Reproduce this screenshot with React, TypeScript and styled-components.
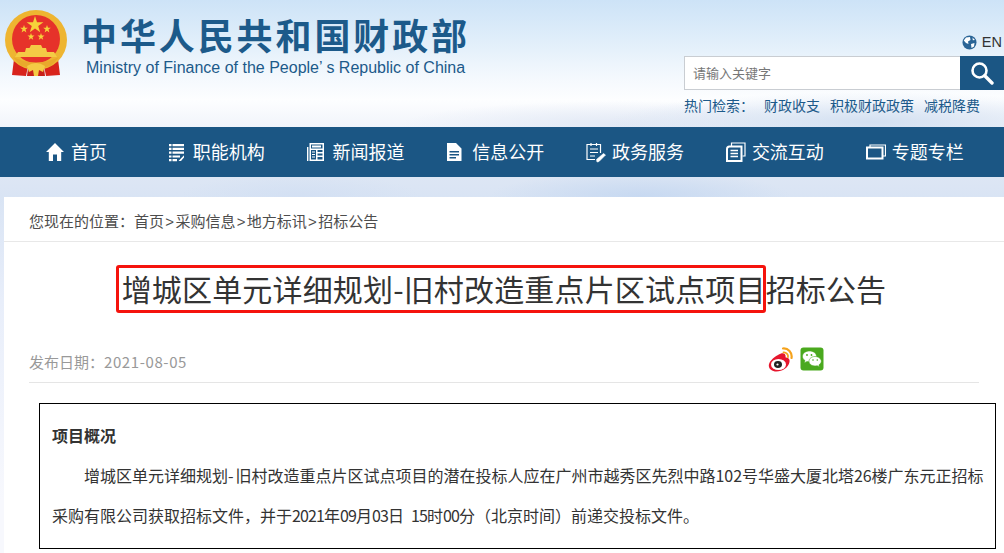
import React from 'react';
import styled, { createGlobalStyle } from 'styled-components';

const GlobalStyle = createGlobalStyle`
  html, body {
    margin: 0;
    padding: 0;
    overflow: hidden;
  }
  body {
    font-family: 'Noto Sans CJK SC', 'Liberation Sans', sans-serif;
    background: #fff;
  }
`;

const Page = styled.div`
  width: 1004px;
  height: 553px;
  overflow: hidden;
  background:
    radial-gradient(ellipse 260px 30px at 870px 122px, #d3e0f1 0%, rgba(211, 224, 241, 0) 100%),
    radial-gradient(ellipse 220px 24px at 620px 125px, #e2e9f5 0%, rgba(226, 233, 245, 0) 100%),
    radial-gradient(ellipse 150px 24px at 640px 196px, #c7d9f1 0%, rgba(199, 217, 241, 0) 100%),
    radial-gradient(ellipse 120px 22px at 300px 196px, #d3e0f3 0%, rgba(211, 224, 243, 0) 100%),
    linear-gradient(
      180deg,
      #cde3f7 0,
      #e0eefa 40px,
      #f3f8fd 75px,
      #fdfeff 100px,
      #f2f5fb 125px,
      #dde6f4 178px,
      #d9e4f4 197px,
      #e8eefa 300px,
      #f7f8fd 500px
    );
`;

const Header = styled.header`
  height: 127px;
  display: flex;
  justify-content: space-between;
`;

const Brand = styled.div`
  display: flex;
  padding: 10px 0 0 5px;
  gap: 14px;
`;

const BrandText = styled.div`
  display: flex;
  flex-direction: column;
`;

const BrandTitle = styled.div`
  font-size: 36px;
  line-height: 48px;
  font-weight: 700;
  letter-spacing: 2.9px;
  color: #1c5a8a;
  white-space: nowrap;
`;

const BrandSub = styled.div`
  font-family: 'Liberation Sans', sans-serif;
  font-size: 16px;
  line-height: 19px;
  margin: 0 0 0 5px;
  color: #1c5a8a;
  white-space: nowrap;
`;

const Tools = styled.div`
  width: 320px;
  display: flex;
  flex-direction: column;
`;

const Lang = styled.div`
  display: flex;
  justify-content: flex-end;
  align-items: center;
  gap: 5px;
  height: 20px;
  margin-top: 32px;
  padding-right: 2px;
  font-family: 'Liberation Sans', sans-serif;
  font-size: 14.5px;
  color: #333;
`;

const Search = styled.div`
  display: flex;
  height: 34px;
  margin-top: 4px;
`;

const SearchInput = styled.div`
  flex: 1;
  box-sizing: border-box;
  background: #fff;
  border: 1px solid #c9cdd2;
  border-right: 0;
  padding-left: 8px;
  font-size: 13px;
  line-height: 32px;
  color: #777;
`;

const SearchButton = styled.div`
  width: 44px;
  background: #1b5684;
  display: flex;
  align-items: center;
  justify-content: center;
`;

const HotRow = styled.div`
  display: flex;
  margin-top: 5px;
  font-size: 14px;
  line-height: 20px;
  color: #1c5a8a;
  white-space: nowrap;
`;

const HotLabel = styled.span`
  width: 80px;
`;

const HotLink = styled.span`
  margin-right: 10px;
`;

const Nav = styled.nav`
  height: 50px;
  display: flex;
  padding-left: 6px;
  background: #1b5684;
`;

const NavItem = styled.div`
  width: 139.8px;
  box-sizing: border-box;
  padding-bottom: 2px;
  display: flex;
  align-items: center;
  justify-content: center;
  gap: 6px;
  color: #fff;
  font-size: 18px;
  white-space: nowrap;
  svg {
    flex: none;
    margin-top: 2px;
  }
`;

const Panel = styled.main`
  margin: 20px 0 0 4px;
  height: 356px;
  background: #fff;
`;

const Crumbs = styled.div`
  height: 45px;
  box-sizing: border-box;
  padding: 14px 0 0 25px;
  border-bottom: 1px solid #e8e8e8;
  font-size: 15px;
  line-height: 20px;
  color: #4d4d4d;
  white-space: nowrap;
`;

const CrumbSep = styled.span`
  font-family: 'Liberation Sans', sans-serif;
  margin: 0 1.3px;
`;

const Title = styled.h1`
  margin: 21px 0 0;
  font-size: 30px;
  line-height: 50px;
  font-weight: 400;
  letter-spacing: 0.16px;
  color: #333;
  text-align: center;
  white-space: nowrap;
`;

const Marked = styled.span`
  position: relative;
  &::after {
    content: '';
    position: absolute;
    left: -6px;
    right: 0;
    top: -1px;
    bottom: -3px;
    border: 3px solid #f5130d;
    border-radius: 3px;
  }
`;

const DateRow = styled.div`
  display: flex;
  justify-content: space-between;
  height: 46px;
  box-sizing: border-box;
  margin: 24px 25px 0;
  padding-top: 14px;
  border-bottom: 1px solid #e5e5e5;
  font-size: 15px;
  line-height: 22px;
  color: #999;
`;

const DateValue = styled.span`
  letter-spacing: 0.6px;
`;

const Share = styled.div`
  display: flex;
  gap: 7px;
  margin: -4px 155px 0 0;
  height: 26px;
`;

const Summary = styled.section`
  box-sizing: border-box;
  margin: 20px 8px 0 35px;
  height: 146px;
  padding: 11px 12px 0;
  border: 1px solid #000;
  background: #fff;
  color: #333;
  font-size: 16px;
  line-height: 40px;
`;

const SummaryTitle = styled.div`
  font-weight: 700;
`;

const SummaryLine = styled.p<{ $indent?: boolean }>`
  margin: 0;
  white-space: pre;
  text-indent: ${p => (p.$indent ? '32px' : '0')};
`;

const Digits = styled.span<{ $loose?: boolean }>`
  letter-spacing: ${p => (p.$loose ? '-0.1px' : '-0.9px')};
`;

const Hyphen = styled.span`
  letter-spacing: 2px;
`;

const Emblem = () => (
  <svg width="62" height="66" viewBox="0 0 62 66">
    <path d="M9 49 L7 65 L21 66 L23 56 Z" fill="#d8231c" />
    <path d="M53 49 L55 65 L41 66 L39 56 Z" fill="#d8231c" />
    <path d="M23 58 H39 L40 66 H22 Z" fill="#c8201a" />
    <ellipse cx="31" cy="30" rx="31" ry="30" fill="#eeb531" />
    <circle cx="31" cy="29" r="24" fill="#e6322a" />
    <path d="M30 6 l2 6.2 h6.4 l-5.2 3.8 2 6.2 -5.2 -3.8 -5.2 3.8 2 -6.2 -5.2 -3.8 h6.4 Z" fill="#f6d23a" />
    <g fill="#f6d23a">
      <path d="M19 15 l1 2.8 h2.8 l-2.3 1.8 .9 2.8 -2.4 -1.7 -2.4 1.7 .9 -2.8 -2.3 -1.8 h2.8 Z" />
      <path d="M42 15 l1 2.8 h2.8 l-2.3 1.8 .9 2.8 -2.4 -1.7 -2.4 1.7 .9 -2.8 -2.3 -1.8 h2.8 Z" />
      <path d="M26 23 l.9 2.6 h2.6 l-2.1 1.6 .8 2.6 -2.2 -1.6 -2.2 1.6 .8 -2.6 -2.1 -1.6 h2.6 Z" />
      <path d="M36 23 l.9 2.6 h2.6 l-2.1 1.6 .8 2.6 -2.2 -1.6 -2.2 1.6 .8 -2.6 -2.1 -1.6 h2.6 Z" />
    </g>
    <path d="M10 47 L52 47 L49 42 L42 42 L41 38 L37.5 38 L36 35 L26 35 L24.5 38 L21 38 L20 42 L13 42 Z" fill="#f4cb45" />
    <path d="M8 47 Q31 58 54 47 L46 56 Q31 60 16 56 Z" fill="#e9a92c" />
    <path d="M22 56 Q31 50 40 56 L38 62 L34 60 L33 66 L29 66 L28 60 L24 62 Z" fill="#f4cb45" />
  </svg>
);

const Globe = () => (
  <svg width="15" height="15" viewBox="0 0 15 15">
    <circle cx="7.5" cy="7.5" r="7" fill="#2a6496" />
    <path d="M4 2.5 L8 2 L8.5 5 L6 6.5 L6.5 9 L4 8 L1.8 5.5 Z M9 9 L12.5 8 L12 11.5 L9.5 13 Z M10.5 2.5 L13 5 L10.8 5.2 Z" fill="#fff" />
  </svg>
);

const Magnifier = () => (
  <svg width="24" height="24" viewBox="0 0 24 24" fill="none" stroke="#fff">
    <circle cx="9.5" cy="9.5" r="7" strokeWidth="2.6" />
    <path d="M14.8 14.8 L22 22" strokeWidth="3.4" strokeLinecap="round" />
  </svg>
);

const HomeIcon = () => (
  <svg width="20" height="20" viewBox="0 0 20 20" fill="#fff">
    <path d="M10 1 L19 10 L16.2 10 L16.2 19 L12 19 L12 12.5 L8 12.5 L8 19 L3.8 19 L3.8 10 L1 10 Z" />
  </svg>
);

const ListIcon = () => (
  <svg width="20" height="20" viewBox="0 0 20 20" fill="#fff">
    <path d="M2 2h2.5v2.2H2zM5.5 2H17v2.2H5.5zM2 5.8h2.5V8H2zM5.5 5.8H17V8H5.5zM2 9.6h2.5v2.2H2zM5.5 9.6H17v2.2H5.5zM2 13.4h2.5v2.2H2zM5.5 13.4H13v2.2H5.5zM2 17h2.5v2.2H2zM5.5 17H10v2.2H5.5zM11.5 19 L17 13.2 L17 15.5 L14 19 Z" />
  </svg>
);

const NewsIcon = () => (
  <svg width="20" height="20" viewBox="0 0 20 20" fill="#fff">
    <path fillRule="evenodd" d="M3.5 1 H18 V19 H3.5 Z M5 2.5 V6.5 H16.5 V2.5 Z M5 8 V17.5 H10 V8 Z M11.5 8 V10 H16.5 V8 Z M11.5 11.5 V13.5 H16.5 V11.5 Z M11.5 15 V17.5 H16.5 V15 Z" />
    <path d="M1 5 H2.4 V19 H1 Z" />
    <path d="M6 3.5h9v2H6zM6 9.5h3v1H6zM6 12h3v1H6zM6 14.5h3v1H6z" />
  </svg>
);

const DocIcon = () => (
  <svg width="20" height="20" viewBox="0 0 20 20" fill="#fff">
    <path fillRule="evenodd" d="M1 1 H10 L15.5 6.5 V19 H1 Z M3.5 9 V10.4 H13 V9 Z M3.5 12 V13.4 H13 V12 Z M3.5 15 V16.4 H10 V15 Z" />
  </svg>
);

const EditIcon = () => (
  <svg width="20" height="21" viewBox="0 0 20 21" fill="none" stroke="#fff" strokeWidth="1.2">
    <path d="M14.5 11 V2.5 H1 V17.5 H9" />
    <path d="M5 1 V4 M10.5 1 V4 M4 7 H12 M4 10.5 H12 M4 14 H9" />
    <path d="M11 20 L10.5 17.5 L17.5 11.5 L19.5 13 L13 19.5 Z" fill="#fff" strokeWidth=".6" />
  </svg>
);

const CopyIcon = () => (
  <svg width="20" height="20" viewBox="0 0 20 20" fill="none" stroke="#fff">
    <path d="M5.5 4 V1 H19 V14 H16.5" strokeWidth="1.2" />
    <path d="M1 7 Q1 4.5 3.5 4.5 H15.5 V19 H1 Z" strokeWidth="2" />
    <path d="M4.5 8.5 H12 M4.5 11.5 H12 M4.5 14.5 H12" strokeWidth="1.4" />
  </svg>
);

const WindowIcon = () => (
  <svg width="20" height="20" viewBox="0 0 20 20" fill="none" stroke="#fff">
    <path d="M4 5 V3 H19.5 V14 H17" strokeWidth="1.2" />
    <rect x="1" y="5.5" width="15.5" height="11" strokeWidth="2" />
  </svg>
);

const WeiboIcon = () => (
  <svg width="25" height="26" viewBox="0 0 25 26">
    <path d="M10 8 C14 5.5 17 6 17.5 8.5 C17.7 9.8 17.3 10.5 18.2 10.6 C21 11 22 13 21.5 15 C20.5 20.5 14.5 24.5 8.5 24.5 C4 24.5 .8 22 .8 18.5 C.8 15 5 10.5 10 8 Z" fill="#e6162d" />
    <ellipse cx="10.5" cy="17.5" rx="7.5" ry="5.5" fill="#fff" />
    <ellipse cx="10" cy="17.5" rx="4" ry="3.4" fill="#222" />
    <circle cx="9.5" cy="17.5" r="1.1" fill="#fff" />
    <path d="M15 1.5 C20 1 24.5 5.5 23.5 11" stroke="#f5a21b" strokeWidth="2.2" fill="none" strokeLinecap="round" />
    <path d="M15.5 5.5 C18 5.2 20.5 7.5 20 10.2" stroke="#f5a21b" strokeWidth="1.8" fill="none" strokeLinecap="round" />
  </svg>
);

const WechatIcon = () => (
  <svg width="24" height="24" viewBox="0 0 24 24">
    <rect x=".5" y=".5" width="23" height="23" rx="3" fill="#4aa91e" />
    <path d="M9.5 4 C5.5 4 2.5 6.4 2.5 9.4 C2.5 11.1 3.4 12.6 5 13.6 L4.2 16 L7 14.5 C8 14.8 9 14.9 10 14.8 C13.5 14.5 16.5 12.5 16.5 9.4 C16.5 6.4 13.5 4 9.5 4 Z" fill="#fff" stroke="#4aa91e" strokeWidth=".6" />
    <path d="M15 9.5 C11.5 9.5 9 11.7 9 14.3 C9 17 11.5 19 15 19 C15.8 19 16.5 18.9 17.2 18.7 L19.5 20 L18.9 17.9 C20.3 17 21.3 15.7 21.3 14.3 C21.3 11.7 18.5 9.5 15 9.5 Z" fill="#fff" stroke="#4aa91e" strokeWidth=".6" />
    <circle cx="7" cy="8" r=".9" fill="#4aa91e" />
    <circle cx="11.5" cy="8" r=".9" fill="#4aa91e" />
    <circle cx="13" cy="13" r=".8" fill="#4aa91e" />
    <circle cx="17.3" cy="13" r=".8" fill="#4aa91e" />
  </svg>
);

const navItems = [
  { label: '首页', icon: <HomeIcon /> },
  { label: '职能机构', icon: <ListIcon /> },
  { label: '新闻报道', icon: <NewsIcon /> },
  { label: '信息公开', icon: <DocIcon /> },
  { label: '政务服务', icon: <EditIcon /> },
  { label: '交流互动', icon: <CopyIcon /> },
  { label: '专题专栏', icon: <WindowIcon /> },
];

const App: React.FC = () => (
  <Page>
    <GlobalStyle />
    <Header>
      <Brand>
        <Emblem />
        <BrandText>
          <BrandTitle>中华人民共和国财政部</BrandTitle>
          <BrandSub>Ministry of Finance of the People’ s Republic of China</BrandSub>
        </BrandText>
      </Brand>
      <Tools>
        <Lang>
          <Globe />
          EN
        </Lang>
        <Search>
          <SearchInput>请输入关键字</SearchInput>
          <SearchButton>
            <Magnifier />
          </SearchButton>
        </Search>
        <HotRow>
          <HotLabel>热门检索&#xFF1A;</HotLabel>
          <HotLink>财政收支</HotLink>
          <HotLink>积极财政政策</HotLink>
          <HotLink>减税降费</HotLink>
        </HotRow>
      </Tools>
    </Header>
    <Nav>
      {navItems.map(item => (
        <NavItem key={item.label}>
          {item.icon}
          {item.label}
        </NavItem>
      ))}
    </Nav>
    <Panel>
      <Crumbs>
        您现在的位置&#xFF1A;首页<CrumbSep>&gt;</CrumbSep>采购信息<CrumbSep>&gt;</CrumbSep>地方标讯<CrumbSep>&gt;</CrumbSep>招标公告
      </Crumbs>
      <Title>
        <Marked>增城区单元详细规划-旧村改造重点片区试点项目</Marked>招标公告
      </Title>
      <DateRow>
        <span>
          发布日期&#xFF1A;<DateValue>2021-08-05</DateValue>
        </span>
        <Share>
          <WeiboIcon />
          <WechatIcon />
        </Share>
      </DateRow>
      <Summary>
        <SummaryTitle>项目概况</SummaryTitle>
        <SummaryLine $indent>
          增城区单元详细规划<Hyphen>-</Hyphen>旧村改造重点片区试点项目的潜在投标人应在广州市越秀区先烈中路<Digits $loose>102</Digits>号华盛大厦北塔<Digits $loose>26</Digits>楼广东元正招标
        </SummaryLine>
        <SummaryLine>
          采购有限公司获取招标文件&#xFF0C;并于<Digits>2021</Digits>年<Digits>09</Digits>月<Digits>03</Digits>日{'  '}<Digits>15</Digits>时<Digits>00</Digits>分&#xFF08;北京时间&#xFF09;前递交投标文件。
        </SummaryLine>
      </Summary>
    </Panel>
  </Page>
);

export default App;
